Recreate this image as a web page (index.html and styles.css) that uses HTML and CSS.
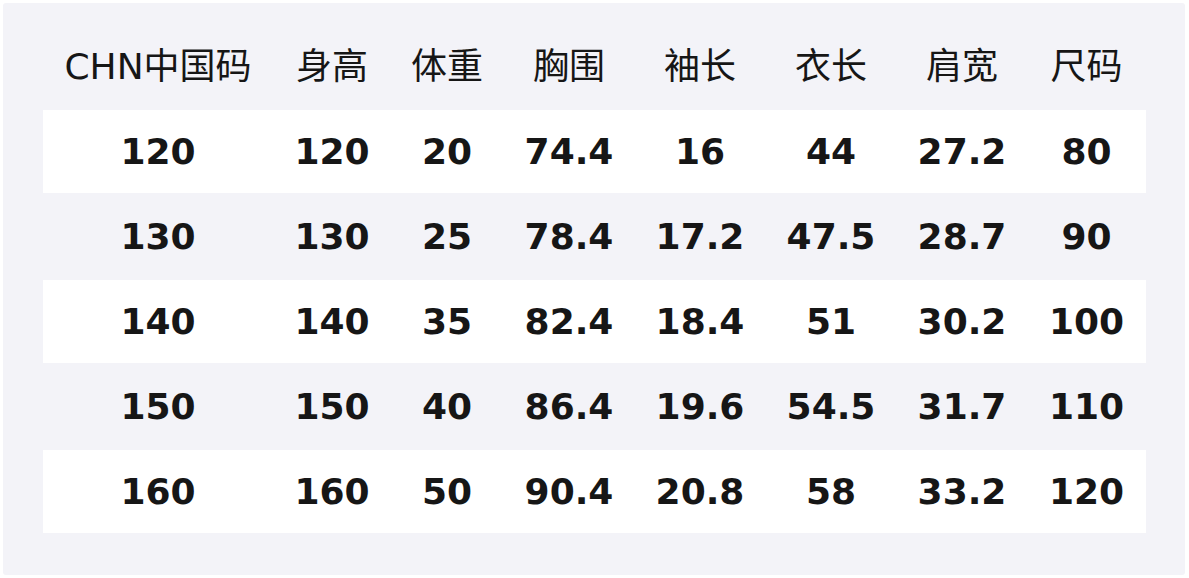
FILE: index.html
```html
<!DOCTYPE html>
<html lang="zh">
<head>
<meta charset="utf-8">
<title>尺码表</title>
<link rel="stylesheet" href="styles.css">
</head>
<body>
<div class="panel">
  <table class="size-table">
    <colgroup>
      <col class="c1"><col class="c2"><col class="c3"><col class="c4"><col class="c5"><col class="c6"><col class="c7"><col class="c8">
    </colgroup>
    <thead>
      <tr class="head">
        <th>CHN中国码</th><th>身高</th><th>体重</th><th>胸围</th><th>袖长</th><th>衣长</th><th>肩宽</th><th>尺码</th>
      </tr>
    </thead>
    <tbody>
      <tr class="light"><td>120</td><td>120</td><td>20</td><td>74.4</td><td>16</td><td>44</td><td>27.2</td><td>80</td></tr>
      <tr class="dark"><td>130</td><td>130</td><td>25</td><td>78.4</td><td>17.2</td><td>47.5</td><td>28.7</td><td>90</td></tr>
      <tr class="light"><td>140</td><td>140</td><td>35</td><td>82.4</td><td>18.4</td><td>51</td><td>30.2</td><td>100</td></tr>
      <tr class="dark"><td>150</td><td>150</td><td>40</td><td>86.4</td><td>19.6</td><td>54.5</td><td>31.7</td><td>110</td></tr>
      <tr class="light"><td>160</td><td>160</td><td>50</td><td>90.4</td><td>20.8</td><td>58</td><td>33.2</td><td>120</td></tr>
    </tbody>
  </table>
</div>
</body>
</html>
```

FILE: styles.css
```css
html, body {
  margin: 0;
  padding: 0;
  background: #ffffff;
}
body {
  font-family: "DejaVu Sans", "Noto Sans CJK SC", sans-serif;
  color: #161616;
}
.panel {
  margin: 3px 4px 3px 3px;
  width: 1182px;
  height: 572px;
  box-sizing: border-box;
  background: #f3f3f8;
  border-radius: 3px;
  padding: 27px 0 0 40px;
}
.size-table {
  border-collapse: collapse;
  border-spacing: 0;
  table-layout: fixed;
  width: 1103px;
}
.c1 { width: 230px; }
.c2 { width: 118px; }
.c3 { width: 112px; }
.c4 { width: 132px; }
.c5 { width: 130px; }
.c6 { width: 132px; }
.c7 { width: 130px; }
.c8 { width: 119px; }
.size-table th,
.size-table td {
  padding: 0;
  text-align: center;
  vertical-align: middle;
  font-size: 36px;
  line-height: 40px;
  white-space: nowrap;
}
.size-table th {
  font-weight: normal;
  height: 74px;
  padding-bottom: 6px;
}
.size-table td {
  font-weight: bold;
}
.light {
  background: #ffffff;
}
.light td { height: 83px; }
.dark {
  background: transparent;
}
.dark td { height: 87px; }
```
